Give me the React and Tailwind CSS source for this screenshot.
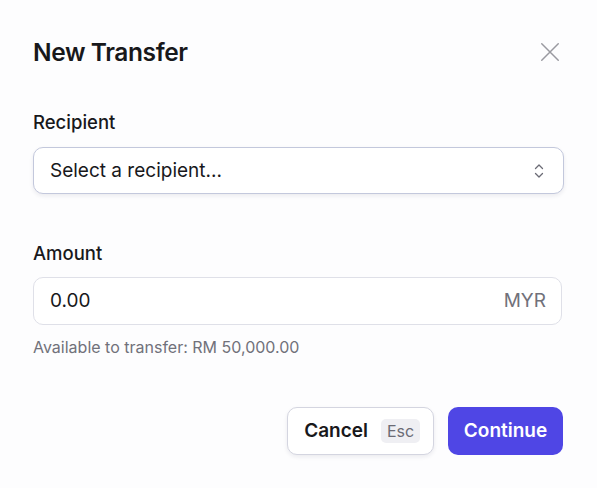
import React from "react";

export default function App() {
  return (
    <div
      className="w-[597px] h-[488px] bg-[#fdfdfe] px-[33px] pt-[36px] text-[#18181b]"
      style={{ fontFamily: "Inter, 'Noto Sans', sans-serif" }}
    >
      <div className="flex items-center justify-between h-[32px]">
        <h2 className="text-[24.5px] leading-[32px] font-semibold tracking-[-0.4px]">New Transfer</h2>
        <button className="mr-[3px] text-[#9a9aa0]">
          <svg width="22" height="22" viewBox="0 0 24 24" fill="none" stroke="currentColor" strokeWidth="1.6" strokeLinecap="round">
            <path d="M3 3 L21 21 M21 3 L3 21" />
          </svg>
        </button>
      </div>

      <div className="mt-[40px] text-[18.5px] leading-[28px] font-medium">Recipient</div>
      <div className="mt-[11px] h-[47px] flex items-center justify-between rounded-[10px] border border-[#c3c8dc] bg-white pl-[16px] pr-[18px] shadow-[0_2px_4px_rgba(30,30,60,0.08)]">
        <span className="text-[19px] pt-[2px]">Select a recipient...</span>
        <svg width="12" height="18" viewBox="0 0 12 18" fill="none" stroke="#6b6b75" strokeWidth="1.3" strokeLinecap="round" strokeLinejoin="round">
          <path d="M2.5 6.5 L6 3 L9.5 6.5" />
          <path d="M2.5 11.5 L6 15 L9.5 11.5" />
        </svg>
      </div>

      <div className="mt-[45px] text-[18.5px] leading-[28px] font-medium">Amount</div>
      <div className="mt-[10px] h-[48px] w-[529px] flex items-center justify-between rounded-[10px] border border-[#dfe0e8] bg-white pl-[16px] pr-[15px]">
        <span className="text-[19px]">0.00</span>
        <span className="text-[19px] text-[#71717a]">MYR</span>
      </div>
      <div className="mt-[12px] text-[16px] leading-[20px] text-[#71717a]">Available to transfer: RM 50,000.00</div>

      <div className="mt-[50px] flex justify-end gap-[14px] pr-[1px]">
        <button className="h-[48px] flex items-center rounded-[10px] border border-[#d4d5e0] bg-white pl-[16px] pr-[13px] shadow-[0_2px_4px_rgba(30,30,60,0.08)]">
          <span className="text-[19px] font-semibold">Cancel</span>
          <kbd className="ml-[13px] h-[24px] w-[39px] flex items-center justify-center rounded-[5px] bg-[#efeff3] text-[16px] text-[#6b6b75]" style={{ fontFamily: "Inter, sans-serif" }}>Esc</kbd>
        </button>
        <button className="h-[48px] w-[115px] flex items-center justify-center rounded-[10px] bg-[#4f46e5] text-white text-[19px] font-semibold">
          Continue
        </button>
      </div>
    </div>
  );
}
